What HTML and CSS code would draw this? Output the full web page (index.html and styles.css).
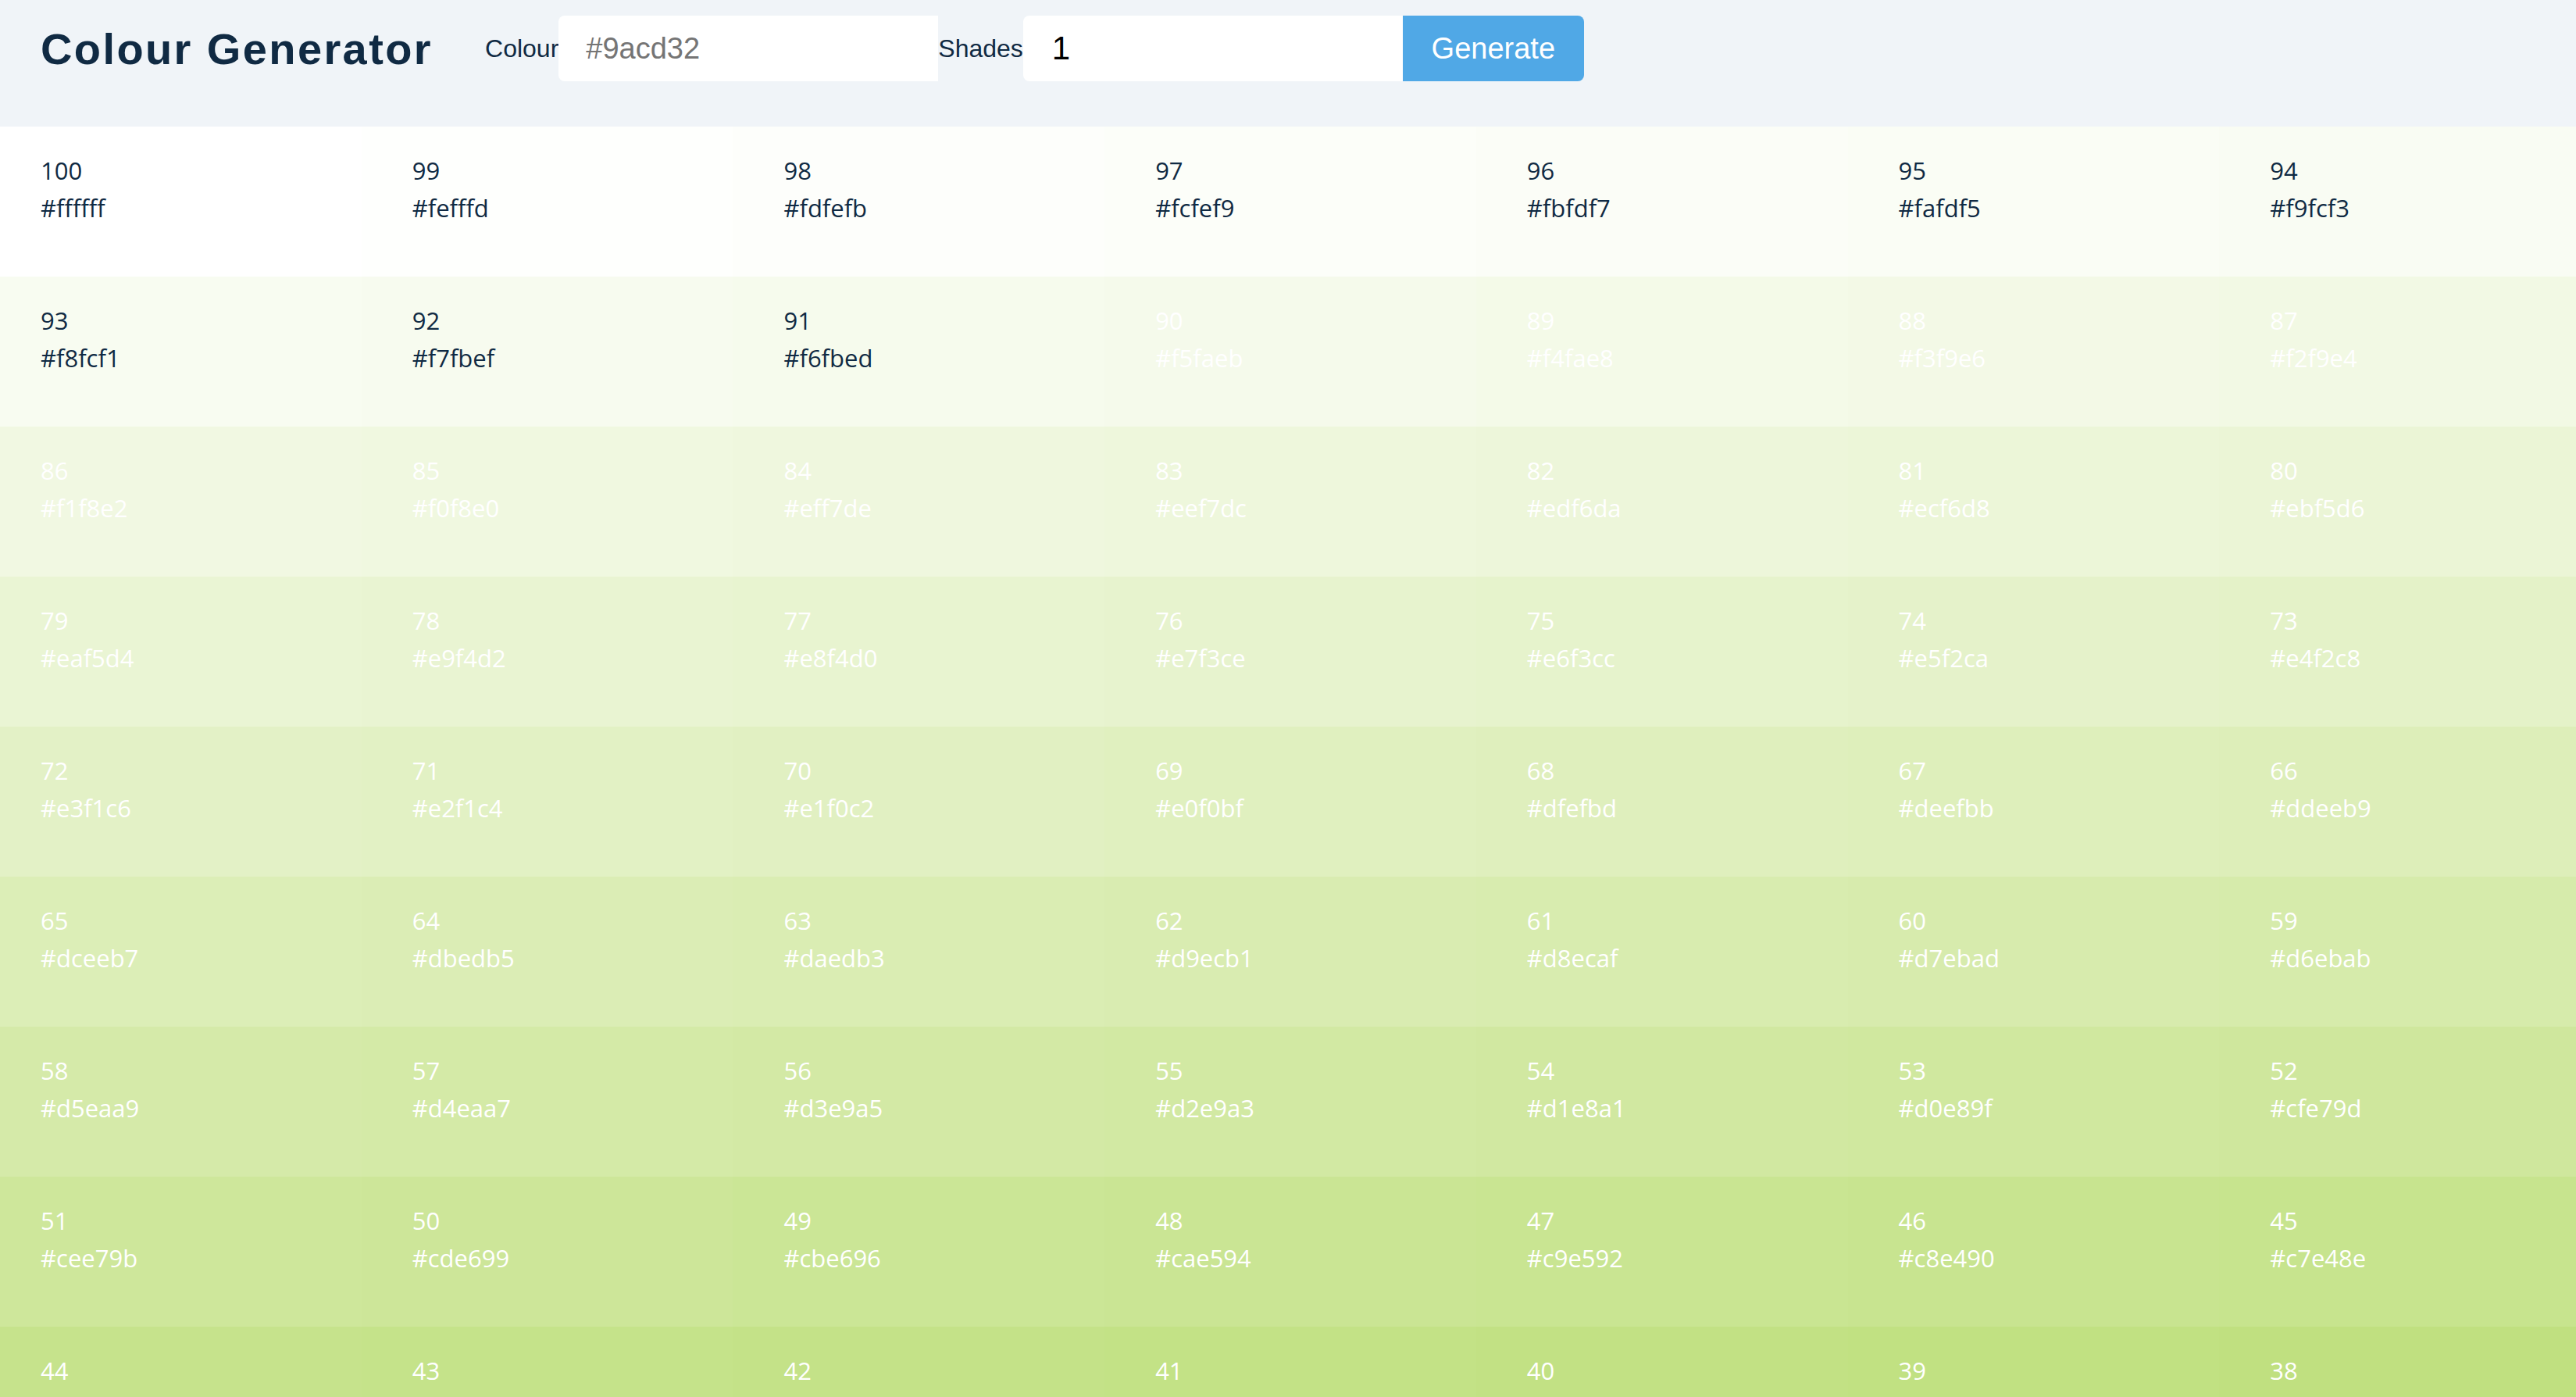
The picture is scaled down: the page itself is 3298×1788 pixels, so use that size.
FILE: index.html
```html
<!DOCTYPE html>
<html lang="en">
<head>
<meta charset="utf-8">
<title>Colour Generator</title>
<link rel="stylesheet" href="styles.css">
</head>
<body>
<header class="topbar">
  <h1 class="title">Colour Generator</h1>
  <form class="controls">
    <label class="label" for="colour">Colour</label>
    <input class="field field-colour" id="colour" type="text" placeholder="#9acd32">
    <label class="label" for="shades">Shades</label>
    <input class="field field-shades" id="shades" type="text" value="1">
    <button class="btn" type="button">Generate</button>
  </form>
</header>
<main class="swatches">
  <div class="grid">
    <div class="swatch dark" style="background:#ffffff"><p>100</p><p>#ffffff</p></div>
    <div class="swatch dark" style="background:#fefffd"><p>99</p><p>#fefffd</p></div>
    <div class="swatch dark" style="background:#fdfefb"><p>98</p><p>#fdfefb</p></div>
    <div class="swatch dark" style="background:#fcfef9"><p>97</p><p>#fcfef9</p></div>
    <div class="swatch dark" style="background:#fbfdf7"><p>96</p><p>#fbfdf7</p></div>
    <div class="swatch dark" style="background:#fafdf5"><p>95</p><p>#fafdf5</p></div>
    <div class="swatch dark" style="background:#f9fcf3"><p>94</p><p>#f9fcf3</p></div>
    <div class="swatch dark" style="background:#f8fcf1"><p>93</p><p>#f8fcf1</p></div>
    <div class="swatch dark" style="background:#f7fbef"><p>92</p><p>#f7fbef</p></div>
    <div class="swatch dark" style="background:#f6fbed"><p>91</p><p>#f6fbed</p></div>
    <div class="swatch" style="background:#f5faeb"><p>90</p><p>#f5faeb</p></div>
    <div class="swatch" style="background:#f4fae8"><p>89</p><p>#f4fae8</p></div>
    <div class="swatch" style="background:#f3f9e6"><p>88</p><p>#f3f9e6</p></div>
    <div class="swatch" style="background:#f2f9e4"><p>87</p><p>#f2f9e4</p></div>
    <div class="swatch" style="background:#f1f8e2"><p>86</p><p>#f1f8e2</p></div>
    <div class="swatch" style="background:#f0f8e0"><p>85</p><p>#f0f8e0</p></div>
    <div class="swatch" style="background:#eff7de"><p>84</p><p>#eff7de</p></div>
    <div class="swatch" style="background:#eef7dc"><p>83</p><p>#eef7dc</p></div>
    <div class="swatch" style="background:#edf6da"><p>82</p><p>#edf6da</p></div>
    <div class="swatch" style="background:#ecf6d8"><p>81</p><p>#ecf6d8</p></div>
    <div class="swatch" style="background:#ebf5d6"><p>80</p><p>#ebf5d6</p></div>
    <div class="swatch" style="background:#eaf5d4"><p>79</p><p>#eaf5d4</p></div>
    <div class="swatch" style="background:#e9f4d2"><p>78</p><p>#e9f4d2</p></div>
    <div class="swatch" style="background:#e8f4d0"><p>77</p><p>#e8f4d0</p></div>
    <div class="swatch" style="background:#e7f3ce"><p>76</p><p>#e7f3ce</p></div>
    <div class="swatch" style="background:#e6f3cc"><p>75</p><p>#e6f3cc</p></div>
    <div class="swatch" style="background:#e5f2ca"><p>74</p><p>#e5f2ca</p></div>
    <div class="swatch" style="background:#e4f2c8"><p>73</p><p>#e4f2c8</p></div>
    <div class="swatch" style="background:#e3f1c6"><p>72</p><p>#e3f1c6</p></div>
    <div class="swatch" style="background:#e2f1c4"><p>71</p><p>#e2f1c4</p></div>
    <div class="swatch" style="background:#e1f0c2"><p>70</p><p>#e1f0c2</p></div>
    <div class="swatch" style="background:#e0f0bf"><p>69</p><p>#e0f0bf</p></div>
    <div class="swatch" style="background:#dfefbd"><p>68</p><p>#dfefbd</p></div>
    <div class="swatch" style="background:#deefbb"><p>67</p><p>#deefbb</p></div>
    <div class="swatch" style="background:#ddeeb9"><p>66</p><p>#ddeeb9</p></div>
    <div class="swatch" style="background:#dceeb7"><p>65</p><p>#dceeb7</p></div>
    <div class="swatch" style="background:#dbedb5"><p>64</p><p>#dbedb5</p></div>
    <div class="swatch" style="background:#daedb3"><p>63</p><p>#daedb3</p></div>
    <div class="swatch" style="background:#d9ecb1"><p>62</p><p>#d9ecb1</p></div>
    <div class="swatch" style="background:#d8ecaf"><p>61</p><p>#d8ecaf</p></div>
    <div class="swatch" style="background:#d7ebad"><p>60</p><p>#d7ebad</p></div>
    <div class="swatch" style="background:#d6ebab"><p>59</p><p>#d6ebab</p></div>
    <div class="swatch" style="background:#d5eaa9"><p>58</p><p>#d5eaa9</p></div>
    <div class="swatch" style="background:#d4eaa7"><p>57</p><p>#d4eaa7</p></div>
    <div class="swatch" style="background:#d3e9a5"><p>56</p><p>#d3e9a5</p></div>
    <div class="swatch" style="background:#d2e9a3"><p>55</p><p>#d2e9a3</p></div>
    <div class="swatch" style="background:#d1e8a1"><p>54</p><p>#d1e8a1</p></div>
    <div class="swatch" style="background:#d0e89f"><p>53</p><p>#d0e89f</p></div>
    <div class="swatch" style="background:#cfe79d"><p>52</p><p>#cfe79d</p></div>
    <div class="swatch" style="background:#cee79b"><p>51</p><p>#cee79b</p></div>
    <div class="swatch" style="background:#cde699"><p>50</p><p>#cde699</p></div>
    <div class="swatch" style="background:#cbe696"><p>49</p><p>#cbe696</p></div>
    <div class="swatch" style="background:#cae594"><p>48</p><p>#cae594</p></div>
    <div class="swatch" style="background:#c9e592"><p>47</p><p>#c9e592</p></div>
    <div class="swatch" style="background:#c8e490"><p>46</p><p>#c8e490</p></div>
    <div class="swatch" style="background:#c7e48e"><p>45</p><p>#c7e48e</p></div>
    <div class="swatch" style="background:#c6e38c"><p>44</p><p>#c6e38c</p></div>
    <div class="swatch" style="background:#c5e38a"><p>43</p><p>#c5e38a</p></div>
    <div class="swatch" style="background:#c4e288"><p>42</p><p>#c4e288</p></div>
    <div class="swatch" style="background:#c3e286"><p>41</p><p>#c3e286</p></div>
    <div class="swatch" style="background:#c2e184"><p>40</p><p>#c2e184</p></div>
    <div class="swatch" style="background:#c1e182"><p>39</p><p>#c1e182</p></div>
    <div class="swatch" style="background:#c0e080"><p>38</p><p>#c0e080</p></div>
  </div>
</main>
</body>
</html>
```

FILE: styles.css
```css
* { box-sizing: border-box; }

html, body {
  margin: 0;
  padding: 0;
  overflow-x: hidden;
  background: #ffffff;
}

.topbar {
  height: 162px;
  background: #f0f4f8;
  display: flex;
  align-items: flex-start;
  padding: 20px 0 0 52px;
  font-family: "Liberation Sans", Arial, sans-serif;
  color: #102a43;
}

.title {
  margin: 0 67px 0 0;
  height: 84px;
  display: flex;
  align-items: center;
  font-size: 56px;
  font-weight: 700;
  letter-spacing: 2.4px;
  color: #102a43;
}

.controls {
  display: flex;
  align-items: center;
  height: 84px;
  margin: 0;
}

.label {
  font-size: 32px;
  color: #102a43;
}

.field {
  width: 486px;
  height: 84px;
  border: none;
  outline: none;
  border-radius: 8px 0 0 8px;
  background: #ffffff;
  padding: 0 0 0 35px;
  font-family: "Liberation Sans", Arial, sans-serif;
  font-size: 38px;
  color: #000000;
}

.field::placeholder {
  color: #757575;
}

.field-shades {
  font-size: 42px;
  padding-left: 37px;
}

.btn {
  width: 232px;
  height: 84px;
  border: none;
  border-radius: 0 8px 8px 0;
  background: #50a8e6;
  color: #ffffff;
  font-family: "Liberation Sans", Arial, sans-serif;
  font-size: 38px;
  padding: 0;
}

.swatches {
  overflow: hidden;
}

.grid {
  width: 3330px;
  margin-left: -13px;
  display: grid;
  grid-template-columns: repeat(7, 1fr);
  grid-auto-rows: 192px;
}

.swatch {
  padding: 32px 0 0 65px;
  font-family: "Open Sans", "Noto Sans", sans-serif;
  font-size: 31px;
  line-height: 48px;
  color: #ffffff;
}

.swatch p {
  margin: 0;
}

.swatch.dark {
  color: #102a43;
}
```
